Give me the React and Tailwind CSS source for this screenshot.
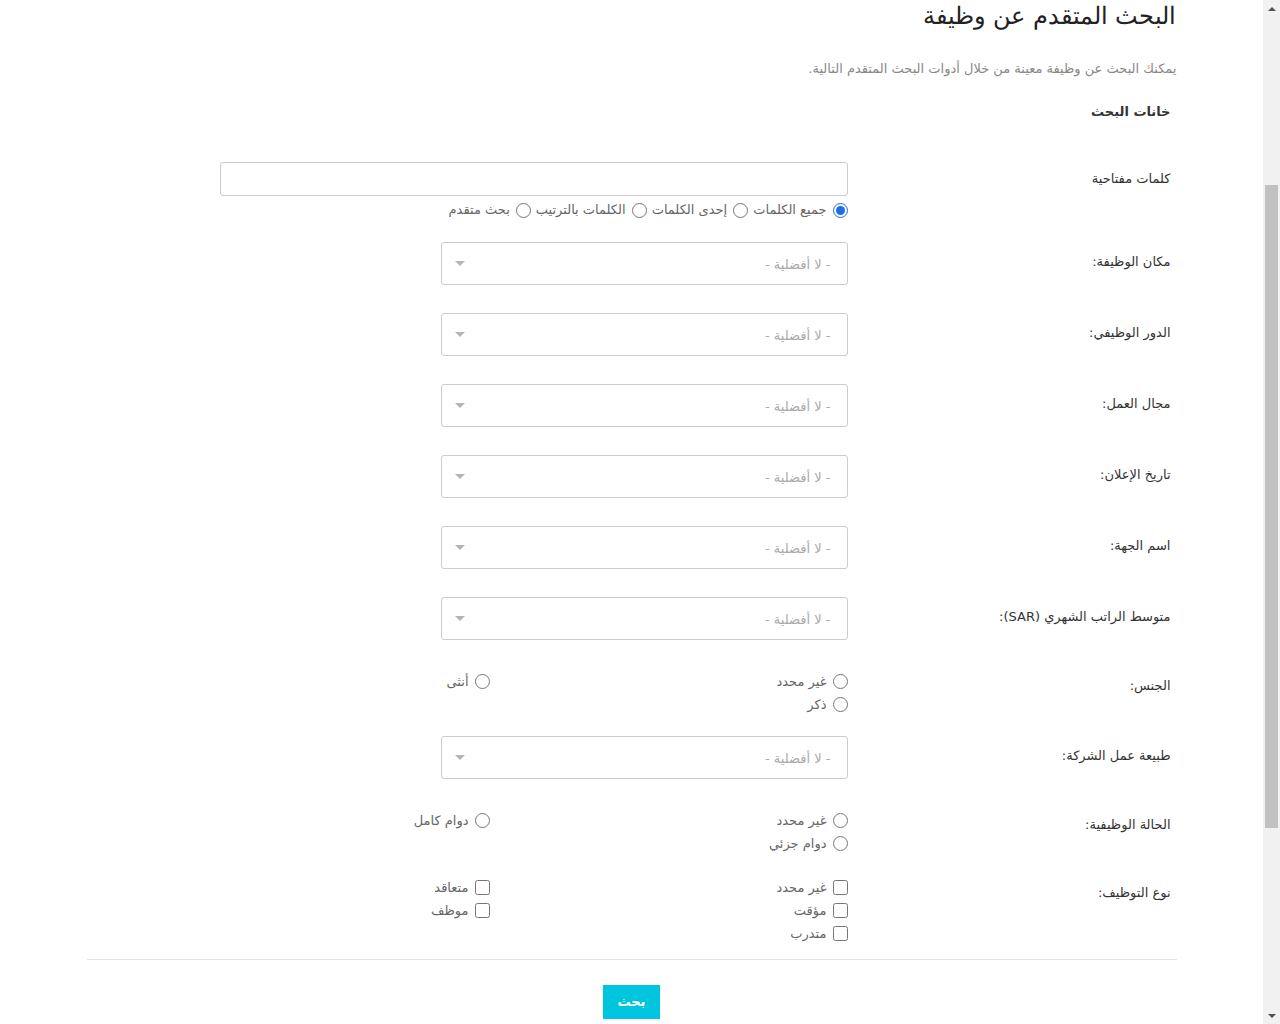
import React from "react";

const font = { fontFamily: '"DejaVu Sans", "Noto Sans", sans-serif' };

const selectRows = [
  "مكان الوظيفة:",
  "الدور الوظيفي:",
  "مجال العمل:",
  "تاريخ الإعلان:",
  "اسم الجهة:",
  "متوسط الراتب الشهري (SAR):",
];

function Label({ children, className = "" }) {
  return (
    <div className={"w-[329px] shrink-0 pr-[6px] text-[13px] leading-[20px] text-[#333] " + className}>
      {children}
    </div>
  );
}

function SelectBox() {
  return (
    <div className="w-[407px] h-[43px] border border-[#ccc] rounded-[3px] flex items-center justify-between pr-[16px] pl-[13px] bg-white">
      <span className="text-[13px] text-[#aaa] pt-[3px]">- لا أفضلية -</span>
      <span className="w-0 h-0 border-l-[5px] border-r-[5px] border-t-[5px] border-l-transparent border-r-transparent border-t-[#b5b5b5]" />
    </div>
  );
}

function SelectRow({ label, className = "" }) {
  return (
    <div className={"flex items-center " + className}>
      <Label className="pb-[4px]">{label}</Label>
      <SelectBox />
    </div>
  );
}

function Choice({ type, name, label, checked }) {
  return (
    <label className="flex items-center gap-[6px] h-[23px] text-[13px] text-[#666]">
      <input
        type={type}
        name={name}
        defaultChecked={checked}
        className="w-[15px] h-[15px] m-0 accent-[#1a6fe6]"
      />
      <span>{label}</span>
    </label>
  );
}

function ChoiceRow({ label, type, name, items, className = "", labelPad = "pt-[6px]" }) {
  return (
    <div className={"flex items-start " + className}>
      <Label className={labelPad}>{label}</Label>
      <div className="grid grid-cols-[358px_358px]">
        {items.map((it) => (
          <Choice key={it} type={type} name={name} label={it} />
        ))}
      </div>
    </div>
  );
}

export default function App() {
  return (
    <div className="flex h-[1024px] overflow-hidden bg-white" style={font}>
      <div className="flex-1 order-1" dir="rtl">
        <div className="w-[1090px] mx-auto">
          <h1 className="mt-[1px] text-[24px] leading-[30px] font-light text-[#222]">
            البحث المتقدم عن وظيفة
          </h1>
          <p className="mt-[28px] text-[13px] leading-[20px] text-[#888]">
            يمكنك البحث عن وظيفة معينة من خلال أدوات البحث المتقدم التالية.
          </p>
          <h3 className="mt-[23px] pr-[6px] text-[13px] leading-[20px] font-bold text-[#333]">
            خانات البحث
          </h3>

          {/* Keywords */}
          <div className="mt-[40px] flex items-center">
            <Label>كلمات مفتاحية</Label>
            <input type="text" className="w-[628px] h-[34px] border border-[#ccc] rounded-[3px] outline-none px-3" />
          </div>
          <div className="mt-[4px] flex">
            <div className="w-[329px] shrink-0" />
            <div className="flex items-center gap-[5px] h-[20px]">
              <Choice type="radio" name="kw" label="جميع الكلمات" checked />
              <Choice type="radio" name="kw" label="إحدى الكلمات" />
              <Choice type="radio" name="kw" label="الكلمات بالترتيب" />
              <Choice type="radio" name="kw" label="بحث متقدم" />
            </div>
          </div>

          <div className="mt-[22px] flex flex-col gap-[28px]">
            {selectRows.map((l) => (
              <SelectRow key={l} label={l} />
            ))}
          </div>

          <ChoiceRow
            className="mt-[30px]"
            label="الجنس:"
            type="radio"
            name="gender"
            items={["غير محدد", "أنثى", "ذكر"]}
          />

          <SelectRow className="mt-[20px]" label="طبيعة عمل الشركة:" />

          <ChoiceRow
            className="mt-[30px]"
            label="الحالة الوظيفية:"
            type="radio"
            name="status"
            items={["غير محدد", "دوام كامل", "دوام جزئي"]}
          />

          <ChoiceRow
            className="mt-[21px]"
            label="نوع التوظيف:"
            type="checkbox"
            name="jobtype"
            labelPad="pt-[7px]"
            items={["غير محدد", "متعاقد", "مؤقت", "موظف", "متدرب"]}
          />

          <hr className="mt-[14px] border-0 border-t border-[#e5e5e5]" />

          <div className="mt-[25px] flex justify-center">
            <button className="w-[57px] h-[34px] bg-[#00c5de] text-white text-[13px] font-bold">
              بحث
            </button>
          </div>
        </div>
      </div>

      {/* scrollbar */}
      <div className="order-2 w-[17px] shrink-0 bg-[#f1f1f1] flex flex-col items-center">
        <div className="h-[17px] flex items-center justify-center">
          <span className="w-0 h-0 border-l-[4px] border-r-[4px] border-b-[4px] border-l-transparent border-r-transparent border-b-[#505050]" />
        </div>
        <div className="mt-[168px] w-[13px] h-[643px] bg-[#c1c1c1]" />
        <div className="flex-1" />
        <div className="h-[17px] flex items-center justify-center">
          <span className="w-0 h-0 border-l-[4px] border-r-[4px] border-t-[4px] border-l-transparent border-r-transparent border-t-[#505050]" />
        </div>
      </div>
    </div>
  );
}
